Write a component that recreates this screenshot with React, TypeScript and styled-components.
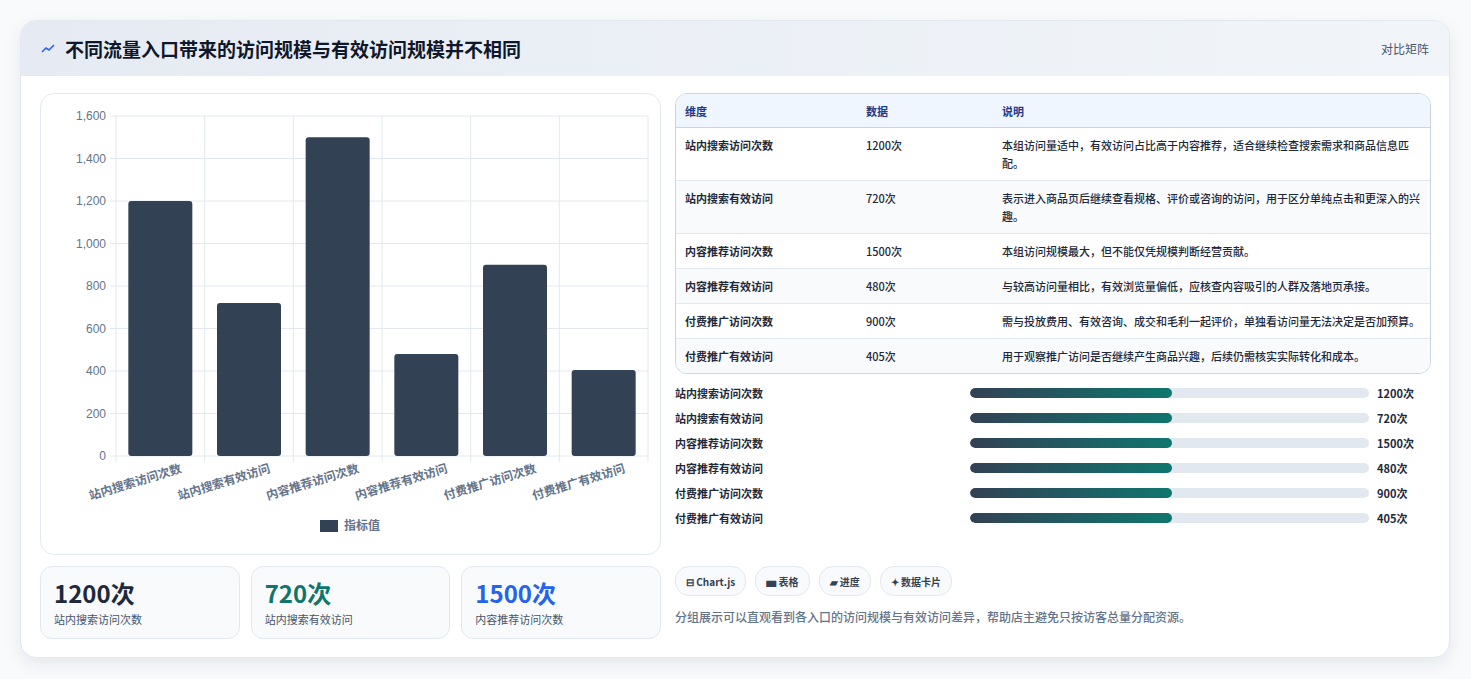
import styled, { createGlobalStyle } from 'styled-components';

const GlobalStyle = createGlobalStyle`
  body {
    margin: 0;
    background: #f8fafc;
    font-family: "Noto Sans CJK SC", "Noto Sans", sans-serif;
  }
`;

const Page = styled.div`
  padding: 20px 21px 22px 20px;
`;

const Card = styled.div`
  background: #fff;
  border: 1px solid #e2e8f0;
  border-radius: 16px;
  box-shadow: 0 6px 18px rgba(15, 23, 42, 0.08);
  overflow: hidden;
`;

const Header = styled.div`
  height: 55px;
  display: flex;
  align-items: center;
  justify-content: space-between;
  padding: 0 20px;
  background: linear-gradient(90deg, #e6ebf3, #f1f5f9);
`;

const Title = styled.h1`
  margin: 0;
  font-size: 19px;
  font-weight: 700;
  color: #0f172a;
  display: flex;
  align-items: center;
  gap: 10px;
`;

const HeaderTag = styled.span`
  font-size: 12px;
  color: #475569;
`;

const Body = styled.div`
  display: grid;
  grid-template-columns: 621px 1fr;
  gap: 14px;
  padding: 17px 18px 18px 19px;
`;

const Column = styled.div`
  display: flex;
  flex-direction: column;
`;

const ChartBox = styled.div`
  height: 460px;
  border: 1px solid #e2e8f0;
  border-radius: 14px;
`;

const Stats = styled.div`
  display: grid;
  grid-template-columns: 1fr 1fr 1fr;
  gap: 11px;
  margin-top: 11px;
`;

const Stat = styled.div`
  border: 1px solid #e2e8f0;
  border-radius: 12px;
  background: #f8fafc;
  padding: 10px 13px 11px;
`;

const StatValue = styled.div<{ color: string }>`
  font-size: 24px;
  font-weight: 700;
  color: ${p => p.color};
  line-height: 32px;
`;

const StatLabel = styled.div`
  font-size: 11px;
  color: #475569;
  margin-top: 2px;
`;

const Table = styled.table`
  width: 100%;
  border-collapse: separate;
  border-spacing: 0;
  border: 1px solid #cbd5e1;
  border-radius: 12px;
  overflow: hidden;
  font-size: 11px;
  color: #1e293b;
`;

const Th = styled.th<{ w?: string }>`
  text-align: left;
  background: #eff6ff;
  color: #1e3a8a;
  font-weight: 700;
  height: 33px;
  padding: 0 9px;
  width: ${p => p.w || 'auto'};
  border-bottom: 1px solid #cbd5e1;
`;

const Td = styled.td<{ strong?: boolean }>`
  padding: 8px 9px;
  line-height: 18px;
  vertical-align: top;
  font-weight: ${p => (p.strong ? 600 : 500)};
  border-bottom: 1px solid #e2e8f0;
  tr:nth-child(even) & { background: #f8fafc; }
  tr:last-child & { border-bottom: none; }
`;

const Bars = styled.div`
  margin-top: 10px;
  display: flex;
  flex-direction: column;
  gap: 7px;
`;

const BarRow = styled.div`
  display: grid;
  grid-template-columns: 287px 399px 1fr;
  gap: 8px;
  align-items: center;
  font-size: 11px;
  font-weight: 600;
  color: #1e293b;
  height: 18px;
`;

const Track = styled.div`
  height: 10px;
  border-radius: 5px;
  background: #e2e8f0;
  overflow: hidden;
`;

const Fill = styled.div`
  height: 100%;
  border-radius: 5px;
  background: linear-gradient(90deg, #334155, #0f766e);
`;

const Chips = styled.div`
  display: flex;
  gap: 9px;
  margin-top: 39px;
`;

const Chip = styled.span`
  font-size: 10px;
  font-weight: 700;
  color: #334155;
  border: 1px solid #e2e8f0;
  background: #f8fafc;
  border-radius: 14px;
  padding: 0 10px;
  height: 28px;
  display: flex;
  align-items: center;
  gap: 3px;
`;

const Note = styled.p`
  margin: 12px 0 0;
  font-size: 12px;
  font-weight: 500;
  color: #64748b;
`;

const rows = [
  ['站内搜索访问次数', 1200, '本组访问量适中，有效访问占比高于内容推荐，适合继续检查搜索需求和商品信息匹配。'],
  ['站内搜索有效访问', 720, '表示进入商品页后继续查看规格、评价或咨询的访问，用于区分单纯点击和更深入的兴趣。'],
  ['内容推荐访问次数', 1500, '本组访问规模最大，但不能仅凭规模判断经营贡献。'],
  ['内容推荐有效访问', 480, '与较高访问量相比，有效浏览量偏低，应核查内容吸引的人群及落地页承接。'],
  ['付费推广访问次数', 900, '需与投放费用、有效咨询、成交和毛利一起评价，单独看访问量无法决定是否加预算。'],
  ['付费推广有效访问', 405, '用于观察推广访问是否继续产生商品兴趣，后续仍需核实实际转化和成本。'],
] as const;

const Chart = () => {
  const left = 75, top = 22, w = 532, h = 340;
  const step = w / 6;
  const ticks = [0, 200, 400, 600, 800, 1000, 1200, 1400, 1600];
  return (
    <svg width="619" height="460" style={{ display: 'block' }}>
      {ticks.map(t => {
        const y = top + h - (t / 1600) * h;
        return (
          <g key={t}>
            <line x1={left - 6} x2={left + w} y1={y} y2={y} stroke="#e2e8f0" />
            <text x={left - 10} y={y + 4} textAnchor="end" fontSize="12" fill="#64748b" fontFamily="Liberation Sans, sans-serif">
              {t.toLocaleString('en-US')}
            </text>
          </g>
        );
      })}
      {Array.from({ length: 7 }).map((_, i) => (
        <line key={i} x1={left + i * step} x2={left + i * step} y1={top} y2={top + h + 6} stroke="#e2e8f0" />
      ))}
      {rows.map((r, i) => {
        const bh = (r[1] / 1600) * h;
        const cx = left + step * i + step / 2;
        return (
          <g key={i}>
            <rect x={cx - 32} y={top + h - bh} width={64} height={bh} rx={3} fill="#334155" />
            <text transform={`translate(${cx + 22},${top + h + 16}) rotate(-17)`} textAnchor="end" fontSize="12" fontWeight="600" fill="#64748b">
              {r[0]}
            </text>
          </g>
        );
      })}
      <rect x={279} y={426} width={18} height={12} fill="#334155" />
      <text x={303} y={436} fontSize="12" fontWeight="600" fill="#64748b">指标值</text>
    </svg>
  );
};

const statData = [
  ['1200次', '站内搜索访问次数', '#1e293b'],
  ['720次', '站内搜索有效访问', '#0f766e'],
  ['1500次', '内容推荐访问次数', '#2563eb'],
];

export default function App() {
  return (
    <Page>
      <GlobalStyle />
      <Card>
        <Header>
          <Title>
            <svg width="14" height="10" viewBox="0 0 14 10">
              <path d="M1 8 L5 4 L8 6 L13 1" stroke="#2563eb" strokeWidth="1.6" fill="none" />
            </svg>
            不同流量入口带来的访问规模与有效访问规模并不相同
          </Title>
          <HeaderTag>对比矩阵</HeaderTag>
        </Header>
        <Body>
          <Column>
            <ChartBox>
              <Chart />
            </ChartBox>
            <Stats>
              {statData.map(s => (
                <Stat key={s[1]}>
                  <StatValue color={s[2]}>{s[0]}</StatValue>
                  <StatLabel>{s[1]}</StatLabel>
                </Stat>
              ))}
            </Stats>
          </Column>
          <Column>
            <Table>
              <thead>
                <tr>
                  <Th w="163px">维度</Th>
                  <Th w="118px">数据</Th>
                  <Th>说明</Th>
                </tr>
              </thead>
              <tbody>
                {rows.map(r => (
                  <tr key={r[0]}>
                    <Td strong>{r[0]}</Td>
                    <Td>{r[1]}次</Td>
                    <Td>{r[2]}</Td>
                  </tr>
                ))}
              </tbody>
            </Table>
            <Bars>
              {rows.map(r => (
                <BarRow key={r[0]}>
                  <span>{r[0]}</span>
                  <Track>
                    <Fill style={{ width: '50.6%' }} />
                  </Track>
                  <span>{r[1]}次</span>
                </BarRow>
              ))}
            </Bars>
            <Chips>
              <Chip>⊟ Chart.js</Chip>
              <Chip>▅ 表格</Chip>
              <Chip>▰ 进度</Chip>
              <Chip>✦ 数据卡片</Chip>
            </Chips>
            <Note>分组展示可以直观看到各入口的访问规模与有效访问差异，帮助店主避免只按访客总量分配资源。</Note>
          </Column>
        </Body>
      </Card>
    </Page>
  );
}
